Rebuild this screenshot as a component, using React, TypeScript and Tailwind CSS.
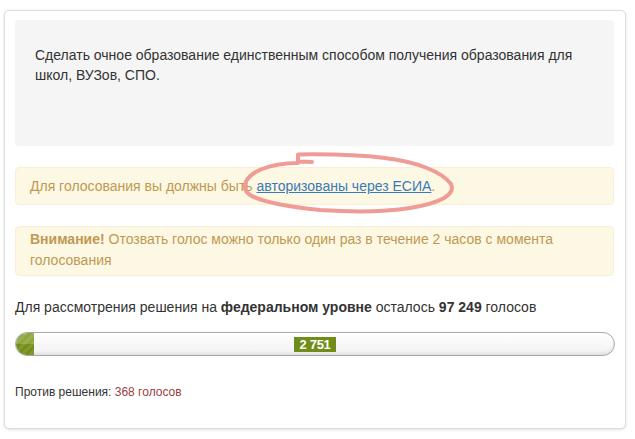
import React from "react";

export default function App() {
  const font = { fontFamily: '"Liberation Sans", Arial, sans-serif' };
  return (
    <div className="relative w-[635px] h-[439px] bg-white overflow-hidden" style={font}>
      <div className="pt-[10px] pl-[4px]">
        <div className="w-[622px] h-[419px] border border-[#dcdcdc] rounded-[5px] shadow-[0_1px_3px_rgba(0,0,0,0.12)] bg-white px-[10px] pt-[9px]">
          <div className="w-[599px] h-[126px] bg-[#f5f5f5] rounded-[4px] px-[20px] pt-[25px] text-[14px] leading-[20px] text-[#333]">
            Сделать очное образование единственным способом получения образования для школ, ВУЗов, СПО.
          </div>
          <div className="mt-[21px] w-[599px] h-[38px] bg-[#fcf8e3] border border-[#fbeed5] rounded-[4px] px-[14px] flex items-center text-[14px] leading-[20px] text-[#c09853]">
            <span>
              Для голосования вы должны быть{" "}
              <a href="#" className="text-[#3a7ab5] underline">авторизованы через ЕСИА</a>.
            </span>
          </div>
          <div className="mt-[21px] w-[599px] h-[50px] bg-[#fcf8e3] border border-[#fbeed5] rounded-[4px] px-[14px] pt-[2px] text-[14px] leading-[21px] text-[#c09853]">
            <span className="font-bold">Внимание!</span> Отозвать голос можно только один раз в течение 2 часов с момента голосования
          </div>
          <div className="mt-[21px] text-[14px] leading-[20px] text-[#333]">
            Для рассмотрения решения на <b>федеральном уровне</b> осталось <b>97 249</b> голосов
          </div>
          <div className="relative mt-[15px] w-[600px] h-[24px] rounded-full border border-[#a9a9a9] bg-gradient-to-b from-white to-[#f1f1f1] shadow-[inset_0_-2px_3px_rgba(0,0,0,0.08)] overflow-hidden">
            <div
              className="absolute left-0 top-0 h-full w-[18px] rounded-l-full bg-[#7f9e20]"
              style={{
                backgroundImage:
                  "linear-gradient(to bottom, rgba(255,255,255,0.15) 0 50%, rgba(0,0,0,0.06) 50% 100%), repeating-linear-gradient(135deg, rgba(255,255,255,0.06) 0 3px, rgba(0,0,0,0.05) 3px 6px)",
              }}
            />
            <div className="absolute inset-0 flex items-center justify-center">
              <span className="bg-[#6f8d18] text-white font-bold text-[13px] leading-[15px] px-[5px] tracking-[-0.3px]">2 751</span>
            </div>
          </div>
          <div className="mt-[28px] text-[12px] leading-[16px] text-[#333]">
            Против решения: <span className="text-[#9a4040]">368 голосов</span>
          </div>
        </div>
      </div>
      <svg className="absolute left-0 top-0 pointer-events-none" width="635" height="439" viewBox="0 0 635 439">
        <path
          d="M312 162 L298 161.5 L298 154.5 C330 154 360 155 385 158 C418 162 442 172 451 184 C456 195 440 203 410 208 C385 212 350 212 320 210 C290 207 262 202 250 195 C240 188 245 176 262 169 C275 164 288 163 298 163"
          fill="none"
          stroke="#ee9790"
          strokeWidth="4"
          strokeLinecap="round"
          strokeLinejoin="round"
          opacity="0.95"
        />
      </svg>
    </div>
  );
}
